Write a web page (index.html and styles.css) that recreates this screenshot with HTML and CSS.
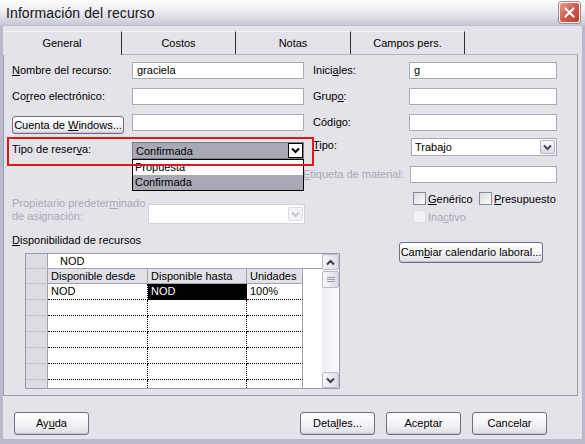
FILE: index.html
```html
<!DOCTYPE html>
<html lang="es">
  <head>
    <meta charset="UTF-8" />
    <meta name="viewport" content="width=device-width, initial-scale=1.0" />
    <title>Información del recurso</title>
    <link rel="stylesheet" href="styles.css">
  </head>
  <body>
    <div class="window">
      <div class="titlebar">
        <span class="title">Información del recurso</span>
        <div class="close-btn">
          <svg width="13" height="13" viewBox="0 0 13 13">
            <path d="M2.5 2.5 L10.5 10.5 M10.5 2.5 L2.5 10.5" stroke="#fff" stroke-width="2.2" stroke-linecap="round" />
          </svg>
        </div>
      </div>

      <div class="tabs">
        <div class="tab active">General</div>
        <div class="tab">Costos</div>
        <div class="tab">Notas</div>
        <div class="tab">Campos pers.</div>
      </div>

      <div class="panel">
        <div class="form-grid">
          <div class="label"><u>N</u>ombre del recurso:</div>
          <div class="input">graciela</div>
          <div class="label right">Inici<u>a</u>les:</div>
          <div class="input">g</div>

          <div class="label">Co<u>r</u>reo electrónico:</div>
          <div class="input"></div>
          <div class="label right">Grup<u>o</u>:</div>
          <div class="input"></div>

          <div class="cell"><div class="button small">Cuenta de <u>W</u>indows...</div></div>
          <div class="input"></div>
          <div class="label right">Códi<u>g</u>o:</div>
          <div class="input"></div>

          <div class="label sel-label">Tipo de reser<u>v</u>a:</div>
          <div class="select open">
            <span class="select-text">Confirmada</span>
            <span class="drop pressed">
              <svg width="9" height="7" viewBox="0 0 9 7"><path d="M1 1.5 L4.5 5 L8 1.5" stroke="#000" stroke-width="2" fill="none" /></svg>
            </span>
          </div>
          <div class="label right tipo-label"><u>T</u>ipo:</div>
          <div class="select tipo">
            <span class="select-text">Trabajo</span>
            <span class="drop">
              <svg width="9" height="7" viewBox="0 0 9 7"><path d="M1 1.5 L4.5 5 L8 1.5" stroke="#4a4a5c" stroke-width="2" fill="none" /></svg>
            </span>
          </div>

          <div class="cell"></div>
          <div class="cell"></div>
          <div class="label right disabled etiqueta"><u>E</u>tiqueta de material:</div>
          <div class="input etiqueta-input"></div>
        </div>

        <div class="owner-row">
          <div class="owner">
            <div class="owner-label disabled">Propietario predeter<u>m</u>inado<br>de asignación:</div>
            <div class="select disabled-select">
              <span class="drop faded">
                <svg width="9" height="7" viewBox="0 0 9 7"><path d="M1 1.5 L4.5 5 L8 1.5" stroke="#c9c9d2" stroke-width="2" fill="none" /></svg>
              </span>
            </div>
          </div>
          <div class="checks">
            <div class="check-line">
              <label class="check first"><span class="box"></span><u>G</u>enérico</label>
              <label class="check"><span class="box"></span><u>P</u>resupuesto</label>
            </div>
            <div class="check-line">
              <label class="check disabled"><span class="box off"></span>Ina<u>c</u>tivo</label>
            </div>
          </div>
        </div>

        <div class="avail-row">
          <div class="avail">
            <div class="label plain"><u>D</u>isponibilidad de recursos</div>
            <div class="grid-wrap">
              <div class="sheet">
                <div class="row entry-row"><div class="rh"></div><div class="entry">NOD</div></div>
                <div class="row head-row">
                  <div class="rh"></div>
                  <div class="hc c1">Disponible desde</div>
                  <div class="hc c2">Disponible hasta</div>
                  <div class="hc c3">Unidades</div>
                </div>
                <div class="row">
                  <div class="rh"></div>
                  <div class="c c1">NOD</div>
                  <div class="c c2 current">NOD</div>
                  <div class="c c3">100%</div>
                </div>
                <div class="row"><div class="rh"></div><div class="c c1"></div><div class="c c2"></div><div class="c c3"></div></div>
                <div class="row"><div class="rh"></div><div class="c c1"></div><div class="c c2"></div><div class="c c3"></div></div>
                <div class="row"><div class="rh"></div><div class="c c1"></div><div class="c c2"></div><div class="c c3"></div></div>
                <div class="row"><div class="rh"></div><div class="c c1"></div><div class="c c2"></div><div class="c c3"></div></div>
                <div class="row"><div class="rh"></div><div class="c c1"></div><div class="c c2"></div><div class="c c3"></div></div>
                <div class="row"><div class="rh"></div><div class="c c1"></div><div class="c c2"></div><div class="c c3"></div></div>
              </div>
              <div class="vscroll">
                <div class="sb-btn">
                  <svg width="9" height="7" viewBox="0 0 9 7"><path d="M1 5.5 L4.5 2 L8 5.5" stroke="#3c3c50" stroke-width="2" fill="none" /></svg>
                </div>
                <div class="sb-btn thumb">
                  <svg width="8" height="7" viewBox="0 0 8 7"><path d="M0 1.5 H8 M0 3.5 H8 M0 5.5 H8" stroke="#9a9aae" stroke-width="1" /></svg>
                </div>
                <div class="sb-track"></div>
                <div class="sb-btn">
                  <svg width="9" height="7" viewBox="0 0 9 7"><path d="M1 1.5 L4.5 5 L8 1.5" stroke="#3c3c50" stroke-width="2" fill="none" /></svg>
                </div>
              </div>
            </div>
          </div>
          <div class="button calendar">Cam<u>b</u>iar calendario laboral...</div>
        </div>

        <!-- overlays: open list and the red highlight box -->
        <div class="drop-list">
          <div class="opt">Propuesta</div>
          <div class="opt hi">Confirmada</div>
        </div>
        <div class="highlight"></div>
      </div>

      <div class="footer">
        <div class="button foot">Ay<u>u</u>da</div>
        <div class="foot-right">
          <div class="button foot">Deta<u>l</u>les...</div>
          <div class="button foot">Aceptar</div>
          <div class="button foot">Cancelar</div>
        </div>
      </div>
    </div>
  </body>
</html>
```

FILE: styles.css
```css
  body {
    margin: 0;
    width: 585px;
    height: 444px;
    overflow: hidden;
    background: #e4e3e9;
    font-family: "Liberation Sans", Arial, sans-serif;
    font-size: 11px;
    color: #000;
  }

  u {
    text-decoration: underline;
    text-underline-offset: 1px;
  }

  .window {
    box-sizing: border-box;
    width: 585px;
    height: 444px;
    border-left: 3px solid #b9b9cb;
    border-right: 3px solid #b9b9cb;
    border-bottom: 5px solid #b9b9cb;
    background: #e4e3e9;
    display: flex;
    flex-direction: column;
  }

  .titlebar {
    height: 25px;
    margin: 0 -3px;
    padding: 0 5px 0 6px;
    display: flex;
    align-items: center;
    justify-content: space-between;
    background: linear-gradient(#fdfdfe, #ececf2 45%, #d6d6e0 80%, #c8c8d5);
    border-bottom: 1px solid #c0c0ce;
  }

  .title {
    font-size: 14px;
    color: #141414;
    letter-spacing: 0.1px;
  }

  .close-btn {
    width: 21px;
    height: 21px;
    box-sizing: border-box;
    border: 1px solid #fff;
    border-radius: 3px;
    background: linear-gradient(135deg, #e89a8c, #cf5a4a 50%, #b9402f);
    box-shadow: 0 0 0 1px #b3808a;
    display: flex;
    align-items: center;
    justify-content: center;
  }

  .tabs {
    display: flex;
    height: 23px;
    margin-top: 5px;
  }

  .tab {
    box-sizing: border-box;
    width: 114px;
    height: 23px;
    line-height: 22px;
    text-align: center;
    border-right: 1px solid #2d2d2d;
    border-top: 1px solid #f4f4f7;
  }

  .tab.active {
    width: 119px;
    position: relative;
    z-index: 1;
    height: 24px;
    background: #e4e3e9;
  }

  .tab:nth-child(3) {
    width: 115px;
  }

  .panel {
    position: relative;
    box-sizing: border-box;
    width: 575px;
    height: 342px;
    border: 1px solid #9b9bab;
    border-top-color: #b3b3c2;
    padding: 7px 0 0 8px;
  }

  .form-grid {
    display: grid;
    grid-template-columns: 120px 172px 105px 148px;
    grid-template-rows: 26px 26px 26px 26px 26px;
  }

  .label {
    height: 17px;
    line-height: 17px;
    white-space: nowrap;
  }

  .label.right {
    padding-left: 9px;
  }

  .label.plain {
    line-height: 13px;
    height: 13px;
  }

  .disabled {
    color: #a9a8b6;
  }

  .input {
    box-sizing: border-box;
    height: 17px;
    line-height: 15px;
    padding-left: 4px;
    background: #fff;
    border: 1px solid #a5acb2;
  }

  .button {
    box-sizing: border-box;
    border: 1px solid #6f6f80;
    border-radius: 3px;
    background: linear-gradient(#ffffff, #f1f1f5 60%, #dcdce4);
    box-shadow: inset 0 -1px 0 #c5c5d1;
    text-align: center;
    white-space: nowrap;
  }

  .button.small {
    width: 112px;
    height: 18px;
    line-height: 16px;
    margin-top: 2px;
  }

  .select {
    box-sizing: border-box;
    height: 18px;
    background: #fff;
    border: 1px solid #a5acb2;
    display: flex;
    align-items: center;
    justify-content: space-between;
    padding: 0 1px 0 3px;
  }

  .select.open {
    margin-top: 2px;
    height: 17px;
    border-color: #7b7b8a;
    background: #a9a9b5;
  }

  .sel-label {
    margin-top: 1px;
  }

  .select.tipo {
    margin-top: -2px;
    margin-left: 2px;
    width: 146px;
  }

  .tipo-label {
    margin-top: -3px;
  }

  .drop {
    box-sizing: border-box;
    width: 15px;
    height: 14px;
    border: 1px solid #b4b4c6;
    border-radius: 2px;
    background: linear-gradient(#fbfbfd, #dcdce6);
    display: flex;
    align-items: center;
    justify-content: center;
  }

  .drop.pressed {
    height: 15px;
    border-color: #000;
    border-radius: 0;
    background: #fff;
    margin-right: -1px;
  }

  .drop.faded {
    border-color: #dedee6;
    background: #f4f4f7;
  }

  .etiqueta {
    padding-left: 0 !important;
    margin-left: -1px;
  }

  .etiqueta-input {
    margin-left: 1px;
  }

  .owner-row {
    display: flex;
    height: 42px;
  }

  .owner {
    width: 293px;
    display: flex;
  }

  .owner-label {
    width: 136px;
    line-height: 13px;
    padding-top: 5px;
  }

  .disabled-select {
    width: 157px;
    height: 20px;
    margin-top: 12px;
    border-color: #d3d3dc;
    justify-content: flex-end;
  }

  .checks {
    padding-left: 108px;
  }

  .check-line {
    display: flex;
    height: 18px;
  }

  .check {
    display: flex;
    align-items: center;
    height: 13px;
  }

  .check.first {
    width: 66px;
  }

  .box {
    box-sizing: border-box;
    width: 13px;
    height: 13px;
    margin-right: 2px;
    border: 1px solid #8a8a9c;
    background: linear-gradient(135deg, #d8d8e0, #ffffff);
  }

  .box.off {
    border-color: #dcdce4;
    background: #f3f3f6;
  }

  .avail-row {
    display: flex;
  }

  .avail {
    width: 328px;
  }

  .grid-wrap {
    box-sizing: border-box;
    width: 315px;
    height: 136px;
    margin: 6px 0 0 13px;
    border: 1px solid #9d9da9;
    background: #fff;
    display: flex;
  }

  .sheet {
    width: 296px;
    overflow: hidden;
  }

  .row {
    display: flex;
    height: 16px;
  }

  .rh {
    box-sizing: border-box;
    width: 22px;
    flex: none;
    background: #dddce3;
    border-right: 1px solid #a3a3ae;
    border-bottom: 1px solid #c4c4ce;
  }

  .entry-row {
    height: 15px;
  }

  .entry {
    flex: 1;
    box-sizing: border-box;
    line-height: 15px;
    padding-left: 12px;
    border-bottom: 1px solid #a3a3ae;
  }

  .head-row {
    height: 15px;
  }

  .hc, .c {
    box-sizing: border-box;
    flex: none;
    padding-left: 3px;
    white-space: nowrap;
    overflow: hidden;
  }

  .hc {
    line-height: 14px;
    background: #e2e1e7;
    border-right: 1px solid #a3a3ae;
    border-bottom: 1px solid #a3a3ae;
  }

  .c {
    line-height: 15px;
    border-bottom: 1px dotted #000;
    border-right: 1px dotted #000;
  }

  .c1 {
    width: 100px;
  }

  .c2 {
    width: 99px;
  }

  .c3 {
    width: 56px;
  }

  .c.c3 {
    border-right: 1px solid #a3a3ae;
  }

  .c.current {
    background: #000;
    color: #fff;
  }

  .vscroll {
    width: 17px;
    display: flex;
    flex-direction: column;
    background: linear-gradient(90deg, #efeff4, #fbfbfd);
  }

  .sb-btn {
    box-sizing: border-box;
    height: 16px;
    border: 1px solid #b9b9cc;
    border-radius: 2px;
    background: linear-gradient(90deg, #f6f6f9, #dcdce6);
    display: flex;
    align-items: center;
    justify-content: center;
  }

  .sb-btn.thumb {
    height: 17px;
    margin-top: 1px;
  }

  .sb-track {
    flex: 1;
  }

  .button.calendar {
    width: 144px;
    height: 21px;
    line-height: 19px;
    margin: 8px 0 0 59px;
  }

  .drop-list {
    position: absolute;
    left: 128px;
    top: 104px;
    width: 172px;
    box-sizing: border-box;
    border: 1px solid #000;
    background: #fff;
    z-index: 1;
  }

  .opt {
    height: 15px;
    line-height: 15px;
    padding-left: 2px;
  }

  .opt.hi {
    background: #a9a9b5;
  }

  .highlight {
    position: absolute;
    left: 3px;
    top: 82px;
    width: 307px;
    height: 29px;
    box-sizing: border-box;
    border: 2px solid #e3161c;
    z-index: 2;
  }

  .footer {
    display: flex;
    padding: 16px 0 0 11px;
  }

  .button.foot {
    width: 75px;
    height: 23px;
    line-height: 21px;
  }

  .foot-right {
    display: flex;
    gap: 11px;
    margin-left: 211px;
  }
```
